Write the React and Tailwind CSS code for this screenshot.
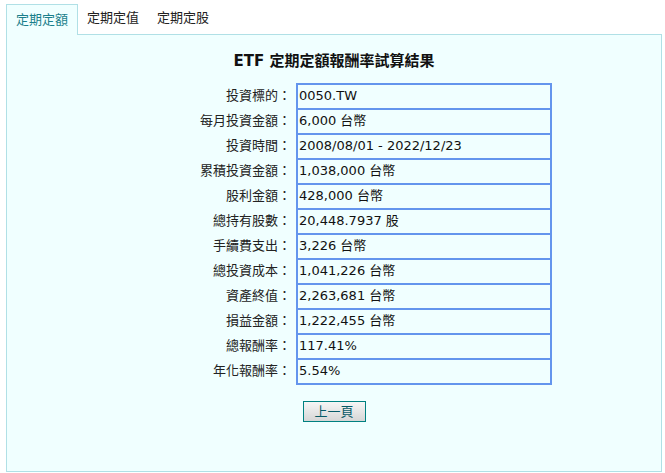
import React from "react";

const rows = [
  ["投資標的：", "0050.TW"],
  ["每月投資金額：", "6,000 台幣"],
  ["投資時間：", "2008/08/01 - 2022/12/23"],
  ["累積投資金額：", "1,038,000 台幣"],
  ["股利金額：", "428,000 台幣"],
  ["總持有股數：", "20,448.7937 股"],
  ["手續費支出：", "3,226 台幣"],
  ["總投資成本：", "1,041,226 台幣"],
  ["資產終值：", "2,263,681 台幣"],
  ["損益金額：", "1,222,455 台幣"],
  ["總報酬率：", "117.41%"],
  ["年化報酬率：", "5.54%"],
];

const font = { fontFamily: '"DejaVu Sans", Verdana, "Noto Sans CJK TC", sans-serif' };

export default function App() {
  return (
    <div className="w-[665px] h-[473px] bg-white text-[13px] text-[#222]" style={font}>
      <div className="pl-[6px] pt-[3px] flex">
        <div className="w-[72px] h-[31px] border border-b-0 border-[#b0e0e6] bg-[#f0ffff] text-[#1b7f8c] flex items-center justify-center relative top-[1px] z-10">
          定期定額
        </div>
        <div className="w-[70px] h-[30px] flex items-center justify-center">定期定值</div>
        <div className="w-[70px] h-[30px] flex items-center justify-center">定期定股</div>
      </div>
      <div className="ml-[6px] w-[656px] h-[438px] border border-[#b0e0e6] bg-[#f0ffff] flex flex-col items-center">
        <div className="mt-[16px] h-[20px] font-bold text-[15px] text-[#111] flex items-center">
          ETF 定期定額報酬率試算結果
        </div>
        <table className="mt-[12px] border-collapse">
          <tbody>
            {rows.map(([k, v]) => (
              <tr key={k} className="h-[25px]">
                <td className="w-[181px] text-right pr-[5px] align-top pt-[3px] leading-[17px] text-[#222]">{k}</td>
                <td className="w-[254px] border-2 border-[#6495ed] pl-[1px] leading-[17px] pt-[2px] align-top text-[#111]">{v}</td>
              </tr>
            ))}
          </tbody>
        </table>
        <button
          className="mt-[16px] w-[63px] h-[21px] border border-[#008080] bg-gradient-to-b from-[#f6f6f6] to-[#d6d6d6] text-[#075a66] text-[13px] flex items-center justify-center"
          style={font}
        >
          上一頁
        </button>
      </div>
    </div>
  );
}
